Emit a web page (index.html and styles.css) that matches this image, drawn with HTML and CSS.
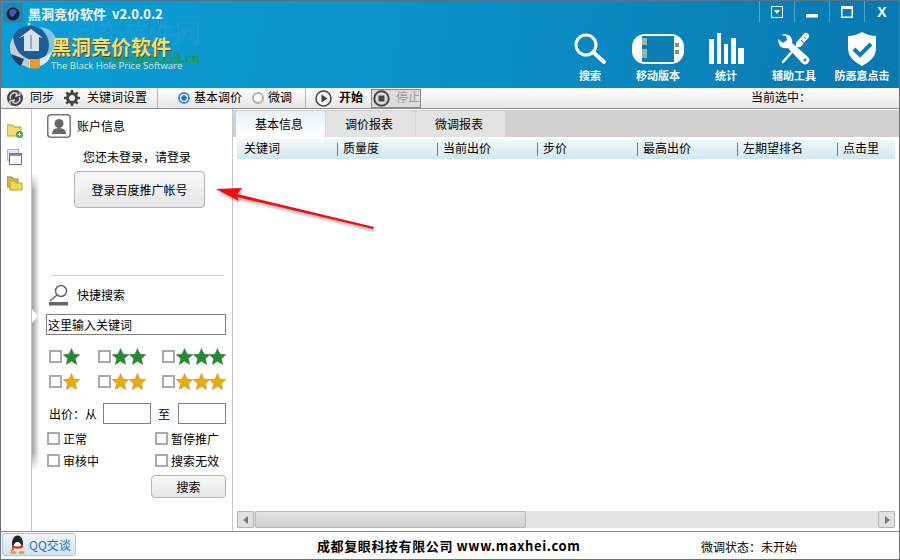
FILE: index.html

```html
<!DOCTYPE html>
<html lang="zh-CN">
<head>
  <meta charset="UTF-8">
  <title>黑洞竞价软件</title>
  <link rel="stylesheet" href="styles.css">
</head>
<body>
  <svg class="defs" width="0" height="0">
    <defs>
      <symbol id="star" viewBox="0 0 14 14">
        <path d="M7 .5 9 5l4.800.5-3.600 3.200L11.200 13.500 7 11 2.800 13.500 3.800 8.700.2 5.500 5 5z"/>
      </symbol>
    </defs>
  </svg>

  <div class="window">
    <header class="banner">
      <div class="mark-cn">河东软件网</div>
      <div class="mark-url">www.pc0359.cn</div>

      <div class="brand">
        <div class="title-row">
          <svg class="app-icon" width="20" height="20" viewBox="0 0 20 20">
            <rect width="20" height="20" rx="2" fill="#2b82ad"/>
            <circle cx="10" cy="11" r="6.500" fill="#14203f"/>
            <path d="M6 8q4-4 8 0-2 5-5 6-3-2-3-6z" fill="#3f5fa8"/>
          </svg>
          <span class="app-title">黑洞竞价软件 v2.0.0.2</span>
        </div>
        <div class="logo-row">
          <svg class="logo" width="50" height="50" viewBox="0 0 50 50">
            <path d="M33 6q11 1 15 9 3 9-4 18l-7 5 1-12V12z" fill="#7fc4e8"/>
            <ellipse cx="23" cy="24" rx="19" ry="19" fill="#1d5c96"/>
            <path d="M6 16Q1 24 4 33q3 9 18 14l3-8Q9 36 6 16z" fill="#c5ccd2"/>
            <path d="M4 33q3 9 10 12l3-7q-8-3-13-5z" fill="#16406e"/>
            <path d="M22 39l3 0q10 0 21-9l-5 10q-7 7-19 7z" fill="#dfe6ea"/>
            <path d="M23 38h10v9q-6 1-10 0z" fill="#e89a2c"/>
            <path d="M17 30V15l-5 2 12-9 12 9-4-1v14z" fill="#d8e4ec"/>
            <path d="M24 14v14" stroke="#8fb0c8" stroke-width="2"/>
            <circle cx="22" cy="3" r="1.500" fill="#cfe0ea"/>
          </svg>
          <div class="logo-text">
            <div class="logo-name">黑洞竞价软件</div>
            <div class="logo-sub">The Black Hole Price Software</div>
          </div>
        </div>
      </div>

      <div class="banner-right">
        <div class="win-btns">
          <div class="win-btn">
            <svg width="12" height="12" viewBox="0 0 12 12"><rect x=".5" y=".5" width="11" height="11" fill="none" stroke="#fff"/><path d="M3 4h6L6 8z" fill="#fff"/></svg>
          </div>
          <div class="win-btn">
            <svg width="12" height="12" viewBox="0 0 12 12"><rect y="8" width="12" height="3.500" fill="#fff"/></svg>
          </div>
          <div class="win-btn">
            <svg width="12" height="12" viewBox="0 0 12 12"><rect x=".75" y=".75" width="10.500" height="10.500" fill="none" stroke="#fff" stroke-width="1.500"/><rect x="1" y="1" width="10" height="2" fill="#fff"/></svg>
          </div>
          <div class="win-btn close">X</div>
        </div>
        <nav class="tools">
          <div class="tool">
            <svg width="34" height="34" viewBox="0 0 34 34"><circle cx="13" cy="13" r="10" fill="none" stroke="#fff" stroke-width="3"/><path d="M20 20l11 10" stroke="#fff" stroke-width="4" stroke-linecap="round"/></svg>
            <span>搜索</span>
          </div>
          <div class="tool">
            <svg width="54" height="34" viewBox="0 0 54 34">
              <rect x="1" y="2" width="52" height="30" rx="13" fill="#fff"/>
              <rect x="11" y="4" width="32" height="26" fill="#0b7fb5"/>
              <rect x="11" y="6" width="5" height="7" fill="#8fb8b0"/>
              <rect x="11" y="17" width="5" height="9" fill="#8fb8b0"/>
              <rect x="44" y="11" width="4" height="4" fill="#6f9f80"/>
              <rect x="44" y="18" width="4" height="4" fill="#6f9f80"/>
            </svg>
            <span>移动版本</span>
          </div>
          <div class="tool">
            <svg width="35" height="34" viewBox="0 0 35 34" fill="#fff"><rect x="0" y="7" width="5" height="25"/><rect x="8" y="1" width="4" height="31"/><rect x="15" y="12" width="4" height="20"/><rect x="22" y="6" width="5" height="26"/><rect x="29" y="16" width="6" height="16"/></svg>
            <span>统计</span>
          </div>
          <div class="tool">
            <svg width="34" height="34" viewBox="0 0 34 34">
              <path d="M20 14 6 30" stroke="#fff" stroke-width="2.500" stroke-linecap="round"/>
              <path d="M22 12 29 4" stroke="#fff" stroke-width="6" stroke-linecap="round"/>
              <path d="M24 8l3 3M27 5l2 2" stroke="#0b7fb5"/>
              <path d="M4 3q5-2 9 1 3 3 2 7l16 14q3 3 0 6-3 3-6 0L11 16q-5 1-8-2-2-3-2-7l5 4 4-3-1-4z" fill="#fff"/>
              <circle cx="28" cy="28" r="1.500" fill="#0b7fb5"/>
            </svg>
            <span>辅助工具</span>
          </div>
          <div class="tool">
            <svg width="30" height="34" viewBox="0 0 30 34">
              <path d="M15 0q7 4 14 4v13q0 10-14 17Q1 27 1 17V4q7 0 14-4z" fill="#fff"/>
              <path d="M7 17l6 6L24 12" fill="none" stroke="#0b7fb5" stroke-width="4"/>
            </svg>
            <span>防恶意点击</span>
          </div>
        </nav>
      </div>
    </header>

    <div class="toolbar">
      <svg class="sync" width="16" height="16" viewBox="0 0 16 16">
        <circle cx="8" cy="8" r="8" fill="#444"/>
        <path d="M3.500 9A4.500 4.500 0 0 1 10 3.500L9 6l4-1V2M12.500 7A4.500 4.500 0 0 1 6 12.500L7 10l-4 1v3" fill="none" stroke="#ddd" stroke-width="1.300"/>
      </svg>
      <span class="label-sync">同步</span>
      <svg class="gear" width="16" height="16" viewBox="0 0 16 16">
        <circle cx="8" cy="8" r="4.500" fill="none" stroke="#444" stroke-width="3"/>
        <path d="M8 0v4M8 12v4M0 8h4M12 8h4M2.300 2.300l2.800 2.800M10.900 10.900l2.800 2.800M13.700 2.300l-2.800 2.800M5.100 10.900l-2.800 2.800" stroke="#444" stroke-width="2.600"/>
      </svg>
      <span class="label-keyword">关键词设置</span>
      <i class="tb-sep"></i>
      <span class="radio on"></span>
      <span class="label-basic">基本调价</span>
      <span class="radio"></span>
      <span class="label-micro">微调</span>
      <i class="tb-sep run-sep"></i>
      <svg class="play" width="17" height="17" viewBox="0 0 17 17"><circle cx="8.500" cy="8.500" r="7.500" fill="#f4f4f4" stroke="#444" stroke-width="1.500"/><path d="M6.500 4.500v8l6-4z" fill="#444"/></svg>
      <span class="label-start">开始</span>
      <div class="stop-box">
        <svg width="17" height="17" viewBox="0 0 17 17"><circle cx="8.500" cy="8.500" r="7.200" fill="#ddd" stroke="#444" stroke-width="2"/><rect x="5.500" y="5.500" width="6" height="6" fill="#444"/></svg>
        <span>停止</span>
      </div>
      <span class="label-current">当前选中：</span>
    </div>

    <div class="main">
      <aside class="rail">
        <svg width="16" height="15" viewBox="0 0 16 15">
          <path d="M0 2h6l1 2h7v9H0z" fill="#f3dc6b" stroke="#b89a30"/>
          <circle cx="12.500" cy="11.500" r="3.500" fill="#3fa34d"/>
          <path d="M10.500 11.500h4M12.500 9.500v4" stroke="#fff"/>
        </svg>
        <svg width="15" height="16" viewBox="0 0 15 16">
          <rect x=".5" y=".5" width="11" height="11" fill="#e6e9f6" stroke="#a5add6"/>
          <rect x="2.500" y="4.500" width="12" height="11" fill="#fff" stroke="#5a70b8"/>
          <rect x="3" y="5" width="11" height="2" fill="#7f92d0"/>
        </svg>
        <svg width="16" height="15" viewBox="0 0 16 15">
          <path d="M0 1h5l1 2h5v8H0z" fill="#cdbb62" stroke="#9c8a30"/>
          <path d="M3 5h5l1 2h6v7H3z" fill="#f5d94f" stroke="#c4a020"/>
        </svg>
      </aside>

      <section class="panel">
        <div class="grip"></div>

        <div class="heading account-heading">
          <svg width="24" height="24" viewBox="0 0 24 24">
            <rect x=".75" y=".75" width="22.500" height="22.500" rx="3" fill="#fff" stroke="#777" stroke-width="1.500"/>
            <circle cx="12" cy="9.500" r="4.500" fill="#666"/>
            <path d="M5 20q0-6 7-6t7 6z" fill="#666"/>
          </svg>
          <span>账户信息</span>
        </div>
        <p class="login-note">您还未登录，请登录</p>
        <button class="btn login-btn">登录百度推广帐号</button>

        <hr class="divider">

        <div class="heading search-heading">
          <svg width="20" height="23" viewBox="0 0 20 23">
            <circle cx="12" cy="7" r="5.500" fill="none" stroke="#666" stroke-width="1.500"/>
            <path d="M8 11 1 17" stroke="#666" stroke-width="1.500"/>
            <rect y="18" width="19" height="3.500" fill="#666"/>
          </svg>
          <span>快捷搜索</span>
        </div>
        <input class="field keyword" type="text" value="这里输入关键词">

        <div class="star-row">
          <div class="star-opt s1"><i class="check"></i><svg class="star green"><use href="#star"/></svg></div>
          <div class="star-opt s2"><i class="check"></i><svg class="star green"><use href="#star"/></svg><svg class="star green"><use href="#star"/></svg></div>
          <div class="star-opt"><i class="check"></i><svg class="star green"><use href="#star"/></svg><svg class="star green"><use href="#star"/></svg><svg class="star green"><use href="#star"/></svg></div>
        </div>
        <div class="star-row">
          <div class="star-opt s1"><i class="check"></i><svg class="star gold"><use href="#star"/></svg></div>
          <div class="star-opt s2"><i class="check"></i><svg class="star gold"><use href="#star"/></svg><svg class="star gold"><use href="#star"/></svg></div>
          <div class="star-opt"><i class="check"></i><svg class="star gold"><use href="#star"/></svg><svg class="star gold"><use href="#star"/></svg><svg class="star gold"><use href="#star"/></svg></div>
        </div>

        <div class="price-row">
          <span class="price-label">出价：从</span>
          <input class="field price" type="text">
          <span class="price-to">至</span>
          <input class="field price" type="text">
        </div>

        <div class="status-grid">
          <label class="opt"><i class="check"></i>正常</label>
          <label class="opt"><i class="check"></i>暂停推广</label>
          <label class="opt"><i class="check"></i>审核中</label>
          <label class="opt"><i class="check"></i>搜索无效</label>
        </div>
        <button class="btn search-btn">搜索</button>
      </section>

      <section class="content">
        <div class="tabs">
          <div class="tab active">基本信息</div>
          <div class="tab">调价报表</div>
          <div class="tab">微调报表</div>
        </div>
        <div class="grid-head">
          <div class="col first">关键词</div>
          <div class="col">质量度</div>
          <div class="col">当前出价</div>
          <div class="col">步价</div>
          <div class="col">最高出价</div>
          <div class="col">左期望排名</div>
          <div class="col last">点击里</div>
        </div>
        <div class="grid-body"></div>
        <div class="hscroll">
          <div class="arrow-btn"><svg width="6" height="8" viewBox="0 0 6 8"><path d="M5 0v8L0 4z" fill="#777"/></svg></div>
          <div class="thumb"></div>
          <div class="arrow-btn right"><svg width="6" height="8" viewBox="0 0 6 8"><path d="M1 0v8l5-4z" fill="#777"/></svg></div>
        </div>
      </section>
    </div>

    <footer class="statusbar">
      <div class="qq-btn">
        <svg width="17" height="19" viewBox="0 0 17 19">
          <ellipse cx="8.500" cy="8" rx="5.500" ry="7.500" fill="#222"/>
          <ellipse cx="8.500" cy="12" rx="4" ry="5" fill="#fff"/>
          <path d="M3 10q5.500 3 11 0v2.500q-5.500 2.500-11 0z" fill="#e02a1a"/>
          <path d="M4 12 2 16l3-1z" fill="#e02a1a"/>
          <ellipse cx="4.500" cy="17.500" rx="3" ry="1.500" fill="#f0a010"/>
          <ellipse cx="12.500" cy="17.500" rx="3" ry="1.500" fill="#f0a010"/>
        </svg>
        <span>QQ交谈</span>
      </div>
      <div class="company">成都复眼科技有限公司 www.maxhei.com</div>
      <div class="micro-state">微调状态：未开始</div>
    </footer>

    <svg class="pointer" width="170" height="60" viewBox="0 0 170 60">
      <defs>
        <filter id="soft" x="-10%" y="-40%" width="120%" height="200%">
          <feDropShadow dx="1" dy="2" stdDeviation="1.500" flood-color="#000" flood-opacity=".4"/>
        </filter>
      </defs>
      <path d="M1 4 27 3 22 9 159 42 158 44 22 12 24 16z" fill="#f00808" filter="url(#soft)"/>
    </svg>
  </div>
</body>
</html>
```

FILE: styles.css

```css
* {
  box-sizing: border-box;
}

html, body {
  margin: 0;
  padding: 0;
}

body {
  font-family: "Noto Sans CJK SC", "Liberation Sans", sans-serif;
  font-size: 12px;
  color: #000;
  background: #fff;
}

.defs {
  position: absolute;
}

.window {
  position: relative;
  width: 900px;
  height: 560px;
  display: flex;
  flex-direction: column;
  border: 1px solid #6c7378;
  border-top: 0;
  overflow: hidden;
}

/* top banner */
.banner {
  position: relative;
  height: 88px;
  flex: none;
  display: flex;
  justify-content: space-between;
  background: linear-gradient(100deg, #0a9ed6 0%, #0a93c9 45%, #0878b0 100%);
  border-top: 1px solid #50748a;
}

.brand {
  position: relative;
  padding: 2px 0 0 2px;
}

.title-row {
  display: flex;
  align-items: center;
  gap: 5px;
  height: 20px;
}

.app-title {
  color: #fff;
  font-size: 13px;
  font-weight: 700;
  word-spacing: 3px;
  font-family: "Noto Sans CJK SC", "DejaVu Sans", sans-serif;
}

.logo-row {
  display: flex;
  margin: -2px 0 0 4px;
}

.logo-text {
  margin: 14px 0 0 -6px;
}

.logo-name {
  color: #e9e27a;
  font-size: 20px;
  line-height: 24px;
  font-weight: 700;
  text-shadow: 1px 1px 0 #4b4b20;
}

.logo-sub {
  color: #dfe8c8;
  font-family: "Open Sans", sans-serif;
  font-size: 9.500px;
  line-height: 11px;
  margin-top: 1px;
}

/* watermark behind the logo */
.mark-cn {
  position: absolute;
  left: 70px;
  top: 17px;
  color: #2c9ad8;
  opacity: .5;
  font-size: 26px;
  line-height: 28px;
}

.mark-url {
  position: absolute;
  left: 100px;
  top: 49px;
  color: #1f9a50;
  font-family: "Liberation Serif", serif;
  font-weight: 700;
  font-size: 15px;
  line-height: 16px;
}

.banner-right {
  display: flex;
  flex-direction: column;
  align-items: flex-end;
}

.win-btns {
  display: flex;
  height: 21px;
}

.win-btn {
  width: 35px;
  display: flex;
  align-items: center;
  justify-content: center;
  border-left: 1px solid rgba(255, 255, 255, .3);
}

.win-btn.close {
  color: #fff;
  font: 700 14px "Liberation Sans", sans-serif;
}

.tools {
  display: flex;
  margin-top: 10px;
  padding-right: 3px;
}

.tool {
  width: 68px;
  display: flex;
  flex-direction: column;
  align-items: center;
  color: #fff;
  font-size: 11px;
  font-weight: 700;
}

.tool svg {
  height: 34px;
  flex: none;
}

.tool span {
  line-height: 14px;
  margin-top: 2px;
  white-space: nowrap;
}

/* toolbar under the banner */
.toolbar {
  height: 21px;
  flex: none;
  display: flex;
  align-items: center;
  padding-left: 6px;
  background: linear-gradient(#ffffff, #e6e6e6);
  border-bottom: 1px solid #8c8c8c;
  line-height: 14px;
}

.toolbar span {
  white-space: nowrap;
}

.toolbar span:not(.radio) {
  margin-bottom: 2px;
}

.label-sync { margin-left: 7px; }
.gear { margin-left: 10px; }
.label-keyword { margin-left: 7px; }

.tb-sep {
  width: 1px;
  height: 19px;
  background: #b5b5b5;
  margin-left: 10px;
}

.tb-sep.run-sep {
  margin-left: 13px;
}

.radio {
  width: 12px;
  height: 12px;
  border-radius: 50%;
  border: 2px solid #b0b0b0;
  background: #fff;
  margin-left: 20px;
}

.radio.on {
  border-color: #3c8fdc;
  background: radial-gradient(circle, #2576c8 0 2.500px, #fff 3px);
}

.label-basic { margin-left: 4px; }
.label-basic + .radio { margin-left: 10px; }
.label-micro { margin-left: 4px; }
.play { margin-left: 9px; }
.label-start { margin-left: 7px; font-weight: 700; }

.stop-box {
  display: flex;
  align-items: center;
  gap: 6px;
  margin-left: 8px;
  height: 19px;
  width: 50px;
  padding-left: 1px;
  background: #dcdcdc;
  border: 1px solid #8a8a8a;
  color: #9a9a9a;
}

.label-current { margin-left: 330px; }

/* middle area */
.main {
  flex: 1;
  display: flex;
  min-height: 0;
  border-bottom: 1px solid #8c8c8c;
}

.rail {
  width: 31px;
  flex: none;
  display: flex;
  flex-direction: column;
  gap: 11px;
  padding: 14px 0 0 6px;
  border-right: 1px solid #c8c8c8;
}

.panel {
  position: relative;
  width: 201px;
  flex: none;
  padding: 5px 5px 0 15px;
  border-right: 1px solid #c8c8c8;
}

.grip {
  position: absolute;
  left: 0;
  top: 64px;
  width: 8px;
  height: 298px;
  background: linear-gradient(90deg, #a0a0a0, #ffffff);
  -webkit-mask-image: linear-gradient(transparent, #000 6%, #000 94%, transparent);
  mask-image: linear-gradient(transparent, #000 6%, #000 94%, transparent);
}

.grip::after {
  content: "";
  position: absolute;
  left: 0;
  top: 136px;
  border-left: 6px solid #fff;
  border-top: 7px solid transparent;
  border-bottom: 7px solid transparent;
}

.heading {
  display: flex;
  align-items: center;
  gap: 6px;
  line-height: 24px;
  position: relative;
}

.login-note {
  margin: 11px 0 0 36px;
  line-height: 16px;
}

.btn {
  font: inherit;
  color: #000;
  border: 1px solid #b4b4b4;
  border-radius: 4px;
  background: linear-gradient(#f8f8f8, #e4e6e7);
  padding: 0;
  display: block;
  position: relative;
}

.login-btn {
  width: 131px;
  height: 37px;
  margin: 6px 0 0 27px;
}

.divider {
  border: 0;
  border-top: 1px solid #d4d4d4;
  margin: 67px 3px 0 5px;
}

.search-heading {
  margin: 7px 0 0 2px;
  gap: 8px;
}

.field {
  font: inherit;
  color: #000;
  border: 1px solid #808080;
  background: #fff;
  padding: 0 1px;
  display: block;
  outline: 0;
  border-radius: 0;
}

.keyword {
  width: 180px;
  height: 21px;
  margin: 7px 0 0 -1px;
  position: relative;
}

.star-row {
  display: flex;
  height: 16px;
  margin: 9px 0 0 2px;
  position: relative;
}

.keyword + .star-row {
  margin-top: 13px;
}

.star-opt {
  display: flex;
  align-items: center;
}

.s1 { width: 49px; }
.s2 { width: 64px; }

.check {
  width: 13px;
  height: 13px;
  flex: none;
  border: 2px solid #ababab;
  background: #fff;
  margin-right: 1px;
}

.star {
  width: 17px;
  height: 17px;
  stroke-width: .5px;
  flex: none;
  margin-right: -.5px;
}

.star.green { fill: #1f8e2e; stroke: #4a7a50; }
.star.gold { fill: #ecaa08; stroke: #b8963c; }

.price-row {
  display: flex;
  align-items: center;
  margin: 14px 0 0 2px;
  position: relative;
}

.price-label { width: 54px; white-space: nowrap; }
.price-to { width: 27px; padding-left: 7px; }

.price {
  width: 48px;
  height: 21px;
}

.status-grid {
  display: grid;
  grid-template-columns: 108px 70px;
  grid-auto-rows: 22px;
  margin-top: 3px;
  position: relative;
}

.opt {
  display: flex;
  align-items: center;
  gap: 2px;
  white-space: nowrap;
}

.search-btn {
  width: 75px;
  height: 23px;
  margin: 4px 0 0 104px;
}

/* report area */
.content {
  flex: 1;
  min-width: 0;
  display: flex;
  flex-direction: column;
  padding: 1px 4px 0 4px;
}

.tabs {
  display: flex;
  height: 28px;
  flex: none;
  margin: 0 -4px 0 -4px;
  padding: 1px 0 0 3px;
  background: #d0d0d0;
  border-bottom: 1px solid #fff;
}

.tab {
  width: 90px;
  padding-right: 3px;
  text-align: center;
  line-height: 25px;
  background: #e3e3e3;
  border-radius: 3px 3px 0 0;
  border-right: 1px solid #d8d8d8;
}

.tab.active {
  background: linear-gradient(#e6f1f8, #ffffff 90%);
  height: 28px;
  position: relative;
}

.grid-head {
  display: flex;
  height: 20px;
  flex: none;
  line-height: 18px;
  background: linear-gradient(#f2f9fb, #d0e8f0);
  margin-top: 1px;
}

.col {
  width: 100px;
  flex: none;
  padding-left: 6px;
  background: linear-gradient(#4d85b0, #4d85b0) left center / 1px 13px no-repeat;
  white-space: nowrap;
}

.col.first {
  background: none;
  padding-left: 7px;
}

.col.last {
  width: 57px;
  overflow: hidden;
}

.grid-body {
  flex: 1;
}

.hscroll {
  height: 17px;
  flex: none;
  display: flex;
  margin-bottom: 3px;
  background: #e4e4e4;
}

.arrow-btn {
  width: 17px;
  display: flex;
  align-items: center;
  justify-content: center;
  background: #e0e0e0;
  border: 1px solid #b4b4b4;
  border-radius: 2px;
}

.arrow-btn.right {
  margin-left: auto;
}

.thumb {
  width: 271px;
  margin-left: 1px;
  background: linear-gradient(#e4e4e4, #cfcfcf);
  border: 1px solid #b8b8b8;
  border-radius: 2px;
}

/* bottom status bar */
.statusbar {
  height: 27px;
  flex: none;
  display: flex;
  align-items: center;
  padding: 0 0 2px 1px;
}

.qq-btn {
  width: 74px;
  height: 23px;
  display: flex;
  align-items: center;
  gap: 3px;
  padding-left: 6px;
  border: 1px solid #a8c4e4;
  border-radius: 3px;
  background: linear-gradient(#f0f5fc, #d4e2f5);
  color: #2a6fb0;
  white-space: nowrap;
}

.company {
  margin: 1px 0 0 241px;
  width: 384px;
  font-weight: 700;
  font-size: 13px;
  letter-spacing: .6px;
  white-space: nowrap;
}

.micro-state {
  margin-top: 3px;
  white-space: nowrap;
}

/* red callout over the login button */
.pointer {
  position: absolute;
  left: 214px;
  top: 185px;
}
```
